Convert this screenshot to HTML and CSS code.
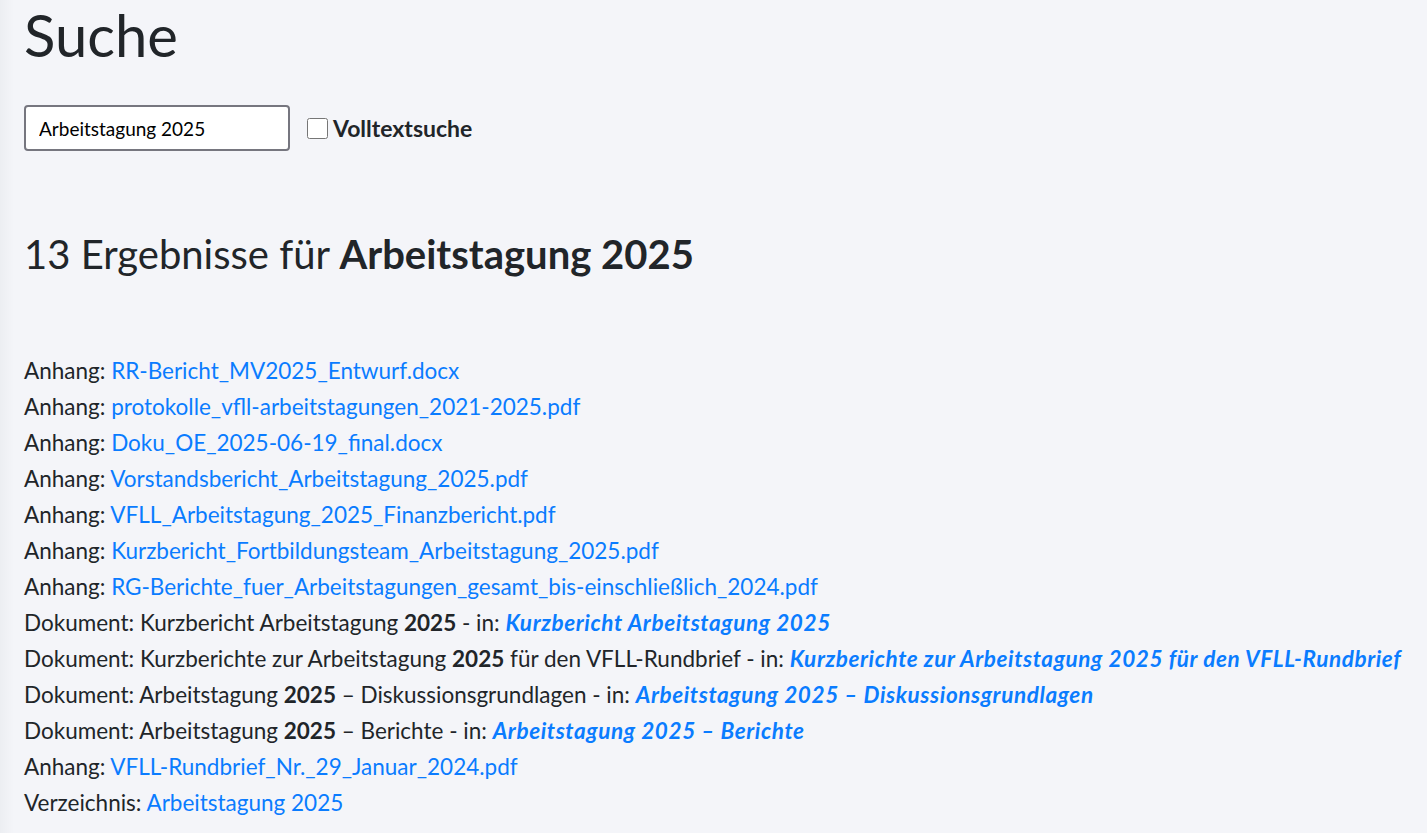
FILE: index.html
```html
<!DOCTYPE html>
<html lang="de">
<head>
    <meta charset="UTF-8">
    <meta name="viewport" content="width=device-width, initial-scale=1.0">
    <title>Suche</title>
    <link rel="stylesheet" href="styles.css">
</head>
<body>
    <div class="content">
        <h1 class="page-title">Suche</h1>

        <form class="search-form" onsubmit="return false">
            <input type="text" class="search-input" value="Arbeitstagung 2025">
            <label class="fulltext">
                <input type="checkbox">
                <span>Volltextsuche</span>
            </label>
        </form>

        <h2 class="result-title">13 Ergebnisse für <strong>Arbeitstagung 2025</strong></h2>

        <ul class="results">
            <li>Anhang: <a href="#">RR-Bericht_MV2025_Entwurf.docx</a></li>
            <li>Anhang: <a href="#">protokolle_vfll-arbeitstagungen_2021-2025.pdf</a></li>
            <li>Anhang: <a href="#">Doku_OE_2025-06-19_final.docx</a></li>
            <li>Anhang: <a href="#">Vorstandsbericht_Arbeitstagung_2025.pdf</a></li>
            <li>Anhang: <a href="#">VFLL_Arbeitstagung_2025_Finanzbericht.pdf</a></li>
            <li>Anhang: <a href="#">Kurzbericht_Fortbildungsteam_Arbeitstagung_2025.pdf</a></li>
            <li>Anhang: <a href="#">RG-Berichte_fuer_Arbeitstagungen_gesamt_bis-einschließlich_2024.pdf</a></li>
            <li>Dokument: Kurzbericht Arbeitstagung <b>2025</b> - in: <a href="#" class="doc-link">Kurzbericht Arbeitstagung 2025</a></li>
            <li>Dokument: Kurzberichte zur Arbeitstagung <b>2025</b> für den VFLL-Rundbrief - in: <a href="#" class="doc-link">Kurzberichte zur Arbeitstagung 2025 für den VFLL-Rundbrief</a></li>
            <li>Dokument: Arbeitstagung <b>2025</b> – Diskussionsgrundlagen - in: <a href="#" class="doc-link">Arbeitstagung 2025 – Diskussionsgrundlagen</a></li>
            <li>Dokument: Arbeitstagung <b>2025</b> – Berichte - in: <a href="#" class="doc-link">Arbeitstagung 2025 – Berichte</a></li>
            <li>Anhang: <a href="#">VFLL-Rundbrief_Nr._29_Januar_2024.pdf</a></li>
            <li>Verzeichnis: <a href="#">Arbeitstagung 2025</a></li>
        </ul>
    </div>
</body>
</html>
```

FILE: styles.css
```css
:root {
    --bg: #f4f5f9;
    --text: #212529;
    --link: #0a7cff;
    --border: #76767f;
}

* {
    box-sizing: border-box;
}

body {
    margin: 0;
    background: linear-gradient(to right, #eceef2 0, var(--bg) 14px);
    color: var(--text);
    font-family: Lato, 'Noto Sans', sans-serif;
    font-size: 20px;
    min-height: 100vh;
}

.content {
    padding: 0 24px;
}

.page-title {
    margin: 0;
    font-size: 58px;
    font-weight: 400;
    line-height: 70px;
}

.search-form {
    display: flex;
    align-items: center;
    gap: 17px;
    margin-top: 35px;
}

.search-input {
    width: 266px;
    height: 46px;
    padding: 0 13px;
    border: 2px solid var(--border);
    border-radius: 4px;
    background: #fff;
    color: #000;
    font-family: inherit;
    font-size: 19px;
}

.fulltext {
    display: flex;
    align-items: center;
    gap: 5px;
    font-weight: 700;
    font-size: 23px;
}

.fulltext input {
    width: 21px;
    height: 21px;
    margin: 0;
}

.result-title {
    margin: 79px 0 0;
    font-size: 40px;
    font-weight: 400;
    line-height: 48px;
}

.result-title strong {
    font-weight: 700;
}

.results {
    list-style: none;
    margin: 75px 0 0;
    padding: 0;
}

.results li {
    line-height: 36px;
    font-size: 22.5px;
}

.results a {
    color: var(--link);
    text-decoration: none;
}

.results b {
    font-weight: 700;
}

.results .doc-link {
    font-weight: 700;
    font-style: italic;
    letter-spacing: 0.6px;
}
```
